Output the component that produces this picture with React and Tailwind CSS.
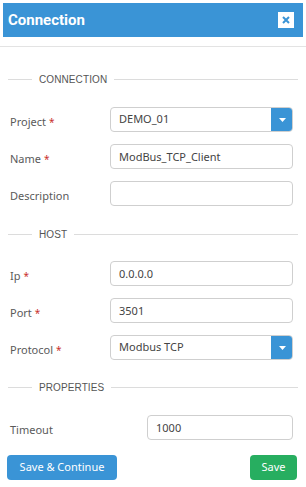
import { useState } from 'react';

function Legend({ title, className = '' }) {
  return (
    <div className={`flex items-center h-[14px] ${className}`}>
      <div className="w-[24px] h-px bg-[#dcdcdc]" />
      <span className="px-[7px] text-[10px] text-[#555] font-['Liberation_Sans',sans-serif] tracking-[0.1px]">
        {title}
      </span>
      <div className="flex-1 h-px bg-[#dcdcdc]" />
    </div>
  );
}

function Label({ text, required }) {
  return (
    <span className="text-[11px] text-[#5a5a5a]">
      {text}
      {required && <span className="text-[#c9302c] ml-[3px] text-[10px]">*</span>}
    </span>
  );
}

function TextRow({ label, required, value, onChange }) {
  return (
    <div className="flex items-center h-[25px] pl-[2px] pr-[2px]">
      <div className="w-[100px] shrink-0">
        <Label text={label} required={required} />
      </div>
      <input
        value={value}
        onChange={(e) => onChange(e.target.value)}
        className="flex-1 min-w-0 h-[25px] px-[8px] border border-[#cfcfcf] rounded-[4px] text-[11px] text-[#444] outline-none"
      />
    </div>
  );
}

function SelectRow({ label, required, value }) {
  return (
    <div className="flex items-center h-[25px] pl-[2px] pr-[2px]">
      <div className="w-[100px] shrink-0">
        <Label text={label} required={required} />
      </div>
      <div className="flex-1 min-w-0 flex h-[25px] border border-[#cfcfcf] rounded-[4px] overflow-hidden">
        <div className="flex-1 flex items-center px-[8px] text-[11px] text-[#444]">{value}</div>
        <div className="w-[22px] bg-[#3a94d6] flex items-center justify-center -my-px -mr-px">
          <svg width="7" height="4" viewBox="0 0 7 4">
            <path d="M0 0 L7 0 L3.5 4 Z" fill="#fff" />
          </svg>
        </div>
      </div>
    </div>
  );
}

export default function App() {
  const [form, setForm] = useState({
    name: 'ModBus_TCP_Client',
    description: '',
    ip: '0.0.0.0',
    port: '3501',
    timeout: '1000',
  });

  const set = (key) => (v) => setForm({ ...form, [key]: v });

  return (
    <div className="w-[306px] h-[487px] bg-white font-['Noto_Sans',sans-serif]">
      <div className="mx-[3px] mt-[3px] h-[34px] bg-[#3a94d6] flex items-center justify-between pl-[5px] pr-[9px]">
        <span className="text-white text-[15px] font-bold font-['Roboto',sans-serif]">Connection</span>
        <button className="w-[16px] h-[16px] bg-white flex items-center justify-center">
          <svg width="8" height="8" viewBox="0 0 8 8">
            <path d="M1 1 L7 7 M7 1 L1 7" stroke="#3a94d6" strokeWidth="2" />
          </svg>
        </button>
      </div>
      <div className="mt-[9px] h-px bg-[#e3e3e3]" />

      <div className="px-[8px]">
        <Legend title="CONNECTION" className="mt-[25px]" />
        <div className="mt-[21px] flex flex-col gap-[12px] pr-[3px]">
          <SelectRow label="Project" required value="DEMO_01" />
          <TextRow label="Name" required value={form.name} onChange={set('name')} />
          <TextRow label="Description" value={form.description} onChange={set('description')} />
        </div>

        <Legend title="HOST" className="mt-[21px]" />
        <div className="mt-[20px] flex flex-col gap-[12px] pr-[3px]">
          <TextRow label="Ip" required value={form.ip} onChange={set('ip')} />
          <TextRow label="Port" required value={form.port} onChange={set('port')} />
          <SelectRow label="Protocol" required value="Modbus TCP" />
        </div>

        <Legend title="PROPERTIES" className="mt-[20px]" />
        <div className="mt-[21px] flex items-center h-[25px] pl-[2px] pr-[5px]">
          <div className="w-[137px] shrink-0">
            <Label text="Timeout" />
          </div>
          <input
            value={form.timeout}
            onChange={(e) => set('timeout')(e.target.value)}
            className="flex-1 min-w-0 h-[25px] px-[8px] border border-[#cfcfcf] rounded-[4px] text-[11px] text-[#444] outline-none"
          />
        </div>
      </div>

      <div className="mt-[15px] flex justify-between pl-[7px] pr-[9px]">
        <button className="h-[25px] w-[110px] bg-[#3a94d6] text-white text-[11px] rounded-[4px]">
          Save &amp; Continue
        </button>
        <button className="h-[25px] w-[47px] bg-[#27ae60] text-white text-[11px] rounded-[4px]">
          Save
        </button>
      </div>
    </div>
  );
}
